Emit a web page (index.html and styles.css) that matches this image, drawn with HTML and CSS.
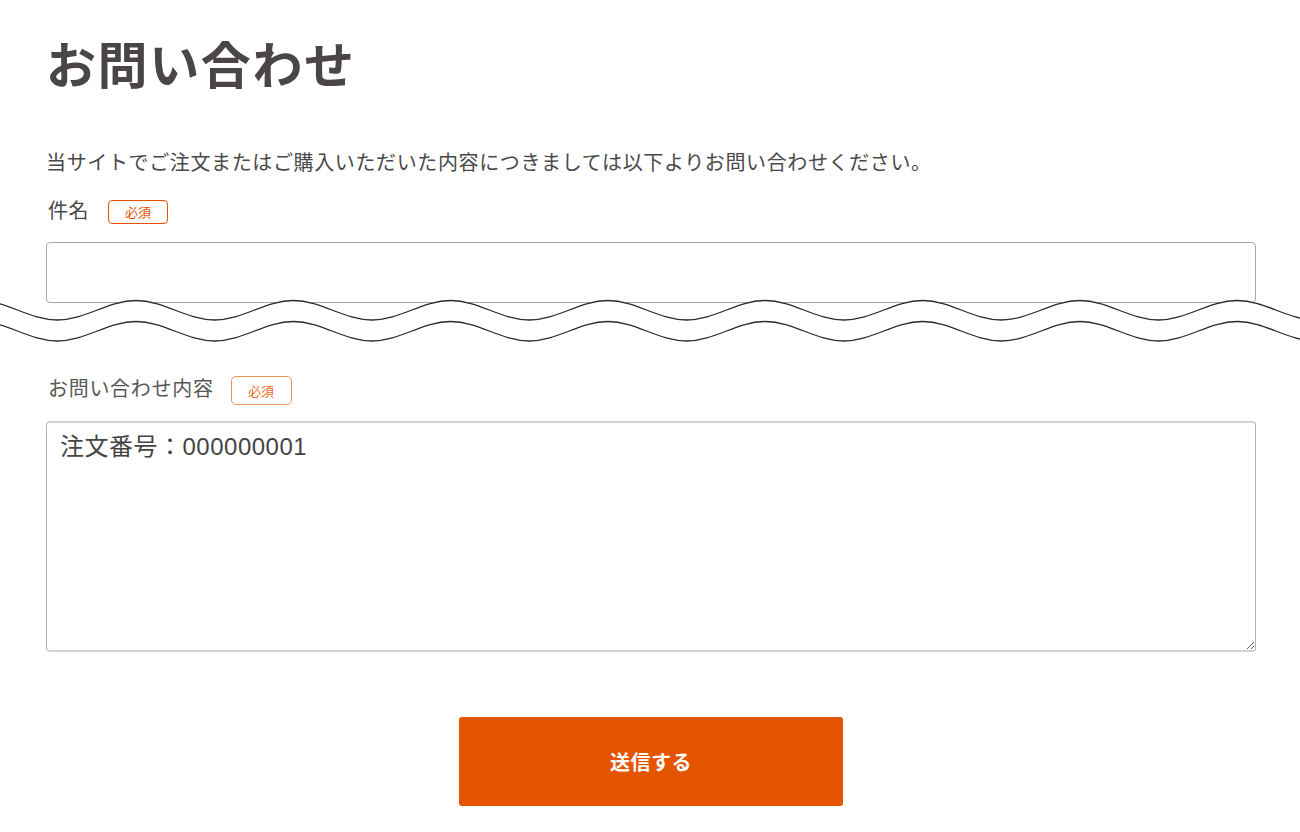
FILE: index.html
```html
<!DOCTYPE html>
<html lang="ja">
<head>
<meta charset="utf-8">
<title>お問い合わせ</title>
<link rel="stylesheet" href="styles.css">
</head>
<body>
<main class="page">
  <h1 class="title">お問い合わせ</h1>
  <p class="lead">当サイトでご注文またはご購入いただいた内容につきましては以下よりお問い合わせください。</p>

  <div class="field-label">
    <span class="label-text">件名</span>
    <span class="badge">必須</span>
  </div>
  <input class="text-input" type="text">

  <svg class="wave" viewBox="0 0 1300 50" width="1300" height="50" aria-hidden="true">
    <path fill="#fff" stroke="none" d="M-21.3 4.5 c28.65 0 50 19.5 78.65 19.5 s50 -19.5 78.65 -19.5 s50 19.5 78.65 19.5 s50 -19.5 78.65 -19.5 s50 19.5 78.65 19.5 s50 -19.5 78.65 -19.5 s50 19.5 78.65 19.5 s50 -19.5 78.65 -19.5 s50 19.5 78.65 19.5 s50 -19.5 78.65 -19.5 s50 19.5 78.65 19.5 s50 -19.5 78.65 -19.5 s50 19.5 78.65 19.5 s50 -19.5 78.65 -19.5 s50 19.5 78.65 19.5 s50 -19.5 78.65 -19.5 s50 19.5 78.65 19.5 L1320 50 L-22 50 Z"/>
    <path fill="none" stroke="#2b2b2b" stroke-width="1.3" d="M-21.3 4.5 c28.65 0 50 19.5 78.65 19.5 s50 -19.5 78.65 -19.5 s50 19.5 78.65 19.5 s50 -19.5 78.65 -19.5 s50 19.5 78.65 19.5 s50 -19.5 78.65 -19.5 s50 19.5 78.65 19.5 s50 -19.5 78.65 -19.5 s50 19.5 78.65 19.5 s50 -19.5 78.65 -19.5 s50 19.5 78.65 19.5 s50 -19.5 78.65 -19.5 s50 19.5 78.65 19.5 s50 -19.5 78.65 -19.5 s50 19.5 78.65 19.5 s50 -19.5 78.65 -19.5 s50 19.5 78.65 19.5"/>
    <path fill="none" stroke="#2b2b2b" stroke-width="1.3" d="M-21.3 25.5 c28.65 0 50 19.5 78.65 19.5 s50 -19.5 78.65 -19.5 s50 19.5 78.65 19.5 s50 -19.5 78.65 -19.5 s50 19.5 78.65 19.5 s50 -19.5 78.65 -19.5 s50 19.5 78.65 19.5 s50 -19.5 78.65 -19.5 s50 19.5 78.65 19.5 s50 -19.5 78.65 -19.5 s50 19.5 78.65 19.5 s50 -19.5 78.65 -19.5 s50 19.5 78.65 19.5 s50 -19.5 78.65 -19.5 s50 19.5 78.65 19.5 s50 -19.5 78.65 -19.5 s50 19.5 78.65 19.5"/>
  </svg>

  <div class="field-label second">
    <span class="label-text">お問い合わせ内容</span>
    <span class="badge badge-light">必須</span>
  </div>
  <textarea class="text-area">注文番号：000000001</textarea>

  <div class="actions">
    <button class="submit" type="button">送信する</button>
  </div>
</main>
</body>
</html>
```

FILE: styles.css
```css
html, body {
  margin: 0;
  padding: 0;
  background: #fff;
}

body {
  font-family: "Noto Sans CJK JP", "Liberation Sans", sans-serif;
  color: #4a4848;
  overflow: hidden;
}

.page {
  width: 1210px;
  padding: 0 0 0 46px;
}

.title {
  margin: 32px 0 0 0;
  font-size: 50px;
  line-height: 60px;
  font-weight: 700;
  color: #4a4646;
  letter-spacing: 1.6px;
}

.lead {
  margin: 55px 0 0 0;
  font-size: 20px;
  line-height: 30px;
  letter-spacing: 0.63px;
  color: #4a4848;
}

.field-label {
  display: flex;
  align-items: center;
  height: 30px;
  margin-top: 18px;
}

.field-label.second {
  margin-top: 27px;
}

.label-text {
  font-size: 20px;
  line-height: 30px;
  letter-spacing: 0.5px;
  padding-left: 2px;
  color: #4a4848;
}

.second .label-text {
  color: #575757;
  letter-spacing: 0.7px;
}

.badge {
  display: flex;
  align-items: center;
  justify-content: center;
  box-sizing: border-box;
  width: 60px;
  height: 24px;
  margin-left: 19px;
  margin-top: 3px;
  border: 1px solid #e65100;
  border-radius: 4px;
  font-size: 13px;
  color: #e65100;
}

.badge-light {
  width: 61px;
  height: 29px;
  margin-left: 17px;
  margin-top: 5px;
  border-color: #f0915c;
  color: #f06a22;
  border-radius: 5px;
}

.text-input {
  display: block;
  box-sizing: border-box;
  width: 1210px;
  height: 61px;
  margin: 17px 0 0 0;
  border: 1px solid #aaaaaa;
  border-radius: 4px;
  background: #fff;
  outline: none;
}

.wave {
  display: block;
  width: 1300px;
  height: 50px;
  margin: -7px 0 0 -46px;
}

.text-area {
  display: block;
  box-sizing: border-box;
  width: 1210px;
  height: 231px;
  margin: 18px 0 0 0;
  padding: 8px 13px;
  border-style: solid;
  border-width: 2px 1px 2px 1px;
  border-color: #d3d3d3 #b3b3b3 #d3d3d3 #b3b3b3;
  border-radius: 4px;
  font-family: "Liberation Sans", "Noto Sans CJK JP", sans-serif;
  font-size: 24px;
  line-height: 32px;
  letter-spacing: 0.5px;
  color: #444;
  background: #fff;
  outline: none;
}

.actions {
  display: flex;
  justify-content: center;
  margin-top: 65px;
}

.submit {
  width: 384px;
  height: 89px;
  border: none;
  border-radius: 3px;
  background: #e55400;
  color: #fff;
  font-family: "Noto Sans CJK JP", "Liberation Sans", sans-serif;
  font-size: 20px;
  font-weight: 700;
  letter-spacing: 0.5px;
  cursor: pointer;
}
```
